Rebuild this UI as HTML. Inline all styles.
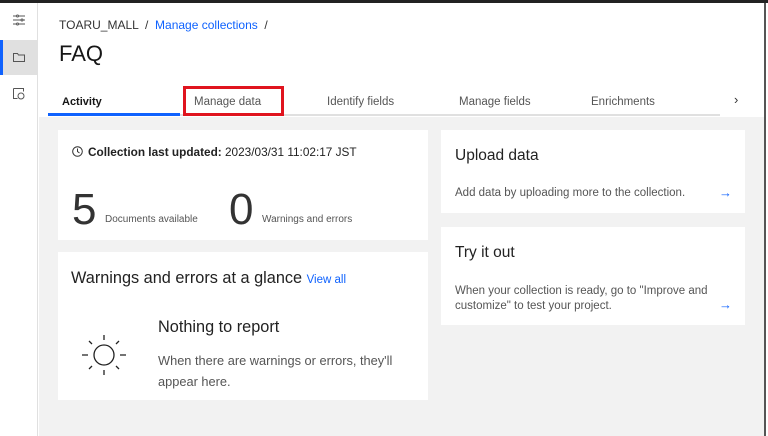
<!DOCTYPE html>
<html><head><style>
*{margin:0;padding:0;box-sizing:border-box}
body{width:768px;height:436px;background:#fff;font-family:"Liberation Sans",sans-serif;position:relative;overflow:hidden;color:#161616}
.a{position:absolute}
.card{position:absolute;background:#fff}
</style></head><body>
<div class="a" style="left:0;top:0;width:768px;height:3px;background:#222"></div>
<div class="a" style="left:0;top:3px;width:38px;height:433px;background:#fff;border-right:1px solid #e0e0e0"></div>
<div class="a" style="left:0;top:40px;width:38px;height:35px;background:#e0e0e0"></div>
<div class="a" style="left:0;top:40px;width:3px;height:35px;background:#0f62fe"></div>
<svg class="a" style="left:12px;top:14px" width="14" height="12" viewBox="0 0 14 12" fill="none" stroke="#555" stroke-width="1"><path d="M1 2h3M7 2h6M1 6h8M11 6h2M1 10h3M7 10h6"/><circle cx="5.5" cy="2" r="1"/><circle cx="10" cy="6" r="1"/><circle cx="5.5" cy="10" r="1"/></svg>
<svg class="a" style="left:13px;top:52px" width="12" height="10" viewBox="0 0 12 10" fill="none" stroke="#555"><path d="M.5 1.5h4l1 1.5h6v6.5H.5z"/></svg>
<svg class="a" style="left:13px;top:88px" width="12" height="12" viewBox="0 0 12 12" fill="none" stroke="#555"><path d="M.5 .5h10v3M.5 .5v10h4"/><circle cx="8" cy="8" r="3"/></svg>
<div class="a" style="left:764px;top:3px;width:2px;height:433px;background:#555"></div>
<div class="a" style="left:39px;top:117px;width:725px;height:319px;background:#f2f2f2"></div>
<div class="a" style="left:59px;top:18px;font-size:12px;color:#333">TOARU_MALL &nbsp;/&nbsp; <span style="color:#0f62fe">Manage collections</span> &nbsp;/</div>
<div class="a" style="left:59px;top:41px;font-size:22px;color:#161616">FAQ</div>
<div class="a" style="left:48px;top:114px;width:672px;height:2px;background:#e0e0e0"></div>
<div class="a" style="left:48px;top:113px;width:132px;height:3px;background:#0f62fe"></div>
<div class="a" style="left:62px;top:96px;font-size:11px;font-weight:bold">Activity</div>
<div class="a" style="left:183px;top:86px;width:101px;height:30px;border:3px solid #e0141e"></div>
<div class="a" style="left:194px;top:96px;font-size:11.5px;color:#555">Manage data</div>
<div class="a" style="left:327px;top:96px;font-size:11.5px;color:#555">Identify fields</div>
<div class="a" style="left:459px;top:96px;font-size:11.5px;color:#555">Manage fields</div>
<div class="a" style="left:591px;top:96px;font-size:11.5px;color:#555">Enrichments</div>
<div class="a" style="left:734px;top:92px;font-size:13px;color:#333">›</div>
<div class="card" style="left:58px;top:130px;width:370px;height:110px"></div>
<svg class="a" style="left:72px;top:146px" width="11" height="11" viewBox="0 0 11 11" fill="none" stroke="#333"><circle cx="5.5" cy="5.5" r="4.8"/><path d="M5.5 2.5v3l2 1.5"/></svg>
<div class="a" style="left:88px;top:145px;font-size:11.8px;color:#222"><b>Collection last updated:</b> 2023/03/31 11:02:17 JST</div>
<div class="a" style="left:72px;top:188px;font-size:44px;color:#333;line-height:44px">5</div>
<div class="a" style="left:105px;top:214px;font-size:10px;color:#555">Documents available</div>
<div class="a" style="left:229px;top:188px;font-size:44px;color:#333;line-height:44px">0</div>
<div class="a" style="left:262px;top:214px;font-size:10px;color:#555">Warnings and errors</div>
<div class="card" style="left:58px;top:252px;width:370px;height:148px"></div>
<div class="a" style="left:71px;top:269px;font-size:16.3px;color:#222">Warnings and errors at a glance <span style="font-size:11.5px;color:#0f62fe">View all</span></div>
<svg class="a" style="left:79px;top:331px" width="50" height="48" viewBox="0 0 50 48" fill="none" stroke="#222" stroke-width="1.3"><circle cx="25" cy="24" r="10"/><path d="M25 4v5M25 39v5M3 24h6M41 24h6M10 10l3 3M37 35l3 3M40 10l-3 3M13 35l-3 3"/></svg>
<div class="a" style="left:158px;top:318px;font-size:16.3px;color:#222">Nothing to report</div>
<div class="a" style="left:158px;top:350px;font-size:12.8px;color:#555;line-height:21px;width:270px">When there are warnings or errors, they'll appear here.</div>
<div class="card" style="left:441px;top:130px;width:304px;height:83px"></div>
<div class="a" style="left:455px;top:147px;font-size:15.5px;color:#222">Upload data</div>
<div class="a" style="left:455px;top:187px;font-size:11.5px;color:#555">Add data by uploading more to the collection.</div>
<div class="a" style="left:719px;top:185px;font-size:13px;color:#0f62fe">→</div>
<div class="card" style="left:441px;top:227px;width:304px;height:98px"></div>
<div class="a" style="left:455px;top:244px;font-size:15.5px;color:#222">Try it out</div>
<div class="a" style="left:455px;top:284px;font-size:11.5px;color:#555;line-height:15px;width:280px">When your collection is ready, go to "Improve and customize" to test your project.</div>
<div class="a" style="left:719px;top:297px;font-size:13px;color:#0f62fe">→</div>
</body></html>
